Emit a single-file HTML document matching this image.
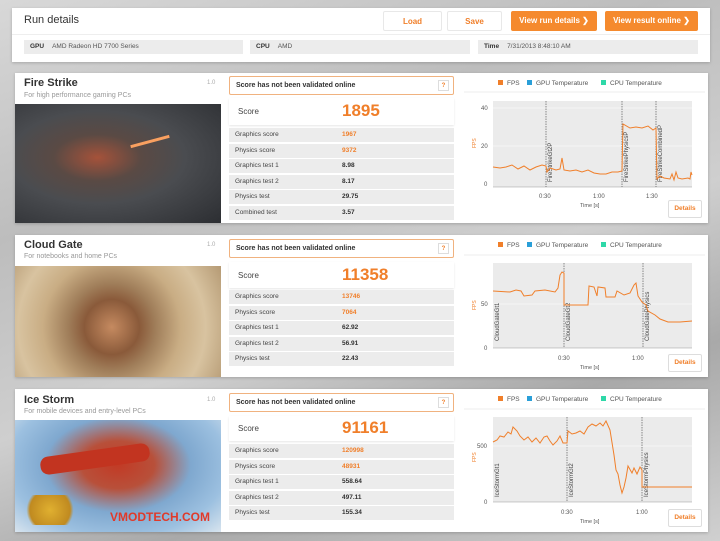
<!DOCTYPE html>
<html><head><meta charset="utf-8"><style>
*{margin:0;padding:0;box-sizing:border-box}
body{width:720px;height:541px;overflow:hidden;position:relative;font-family:"Liberation Sans",sans-serif;
background:linear-gradient(160deg,#d8d8d8 0%,#bdbdbd 30%,#cfcfcf 55%,#a9a9a9 75%,#d0d0d0 100%)}
.a{position:absolute}
.w{background:#fff}
.btn{position:absolute;top:11px;height:20px;font-size:8px;font-weight:bold;text-align:center;line-height:20px;border-radius:2px}
.bw{background:#fff;color:#f07f2a;border:1px solid #e8e8e8}
.bo{background:#f58a2e;color:#fff}
.info{position:absolute;top:40px;height:14px;background:#ececec;font-size:6.5px;line-height:14px;color:#555}
.info b{color:#333;display:inline-block;margin:0 8px 0 6px}
.title{font-size:11px;font-weight:bold;color:#333}
.sub{font-size:7px;color:#999}
.ver{font-size:6px;color:#aaa}
.val{position:absolute;left:229px;width:225px;height:19px;border:1px solid #f0b27f;background:#fff;font-size:7px;font-weight:bold;color:#333;line-height:17px;padding-left:6px;border-radius:2px}
.val i{position:absolute;right:4px;top:3px;width:11px;height:11px;border:1px solid #ddd;font-style:normal;font-size:6px;color:#f07f2a;text-align:center;line-height:10px}
.score{position:absolute;left:229px;width:225px;background:#fff;box-shadow:0 1px 2px rgba(0,0,0,.1)}
.score span{position:absolute;left:9px;font-size:8px;color:#444}
.score b{position:absolute;left:113px;font-size:17px;color:#f07f2a;font-weight:bold}
.row{position:absolute;left:229px;width:225px;height:14px;background:#ececec;font-size:6.5px;line-height:14px;color:#444}
.row span{position:absolute;left:6px}
.row b{position:absolute;left:113px;color:#333}
.row b.o{color:#f07f2a}
.det{position:absolute;width:34px;height:18px;background:#fff;border:1px solid #ddd;font-size:6.5px;font-weight:bold;color:#f07f2a;text-align:center;line-height:16px;border-radius:2px}
</style></head><body>

<div class="a w" style="left:12px;top:8px;width:698px;height:54px;box-shadow:0 1px 3px rgba(0,0,0,.2)"></div>
<div class="a" style="left:24px;top:14px;font-size:11px;color:#333">Run details</div>
<div class="a" style="left:12px;top:34px;width:698px;height:1px;background:#eee"></div>
<div class="btn bw" style="left:383px;width:59px">Load</div>
<div class="btn bw" style="left:447px;width:55px">Save</div>
<div class="btn bo" style="left:511px;width:86px">View run details ❯</div>
<div class="btn bo" style="left:605px;width:93px">View result online ❯</div>
<div class="info" style="left:24px;width:219px"><b>GPU</b>AMD Radeon HD 7700 Series</div>
<div class="info" style="left:250px;width:220px"><b>CPU</b>AMD</div>
<div class="info" style="left:478px;width:220px"><b>Time</b>7/31/2013 8:48:10 AM</div>

<div class="a w" style="left:15px;top:73px;width:693px;height:150px;box-shadow:0 1px 3px rgba(0,0,0,.2)"></div>
<div class="a title" style="left:24px;top:77px">Fire Strike</div>
<div class="a sub" style="left:24px;top:92px">For high performance gaming PCs</div>
<div class="a ver" style="left:207px;top:80px">1.0</div>
<div class="a" style="left:15px;top:104px;width:206px;height:119px;background:radial-gradient(ellipse at 40% 45%,#a5523a 0%,#5a4a44 25%,#4a4c50 50%,#2c2e32 100%)"></div>
<div class="a" style="left:130px;top:140px;width:40px;height:3px;background:#f9a060;transform:rotate(-15deg)"></div>
<div class="val" style="top:76px">Score has not been validated online<i>?</i></div>
<div class="score" style="top:98px;height:27px"><span style="top:9px">Score</span><b style="top:3px">1895</b></div>
<div class="row" style="top:128px"><span>Graphics score</span><b class="o">1967</b></div>
<div class="row" style="top:143.5px"><span>Physics score</span><b class="o">9372</b></div>
<div class="row" style="top:159px"><span>Graphics test 1</span><b>8.98</b></div>
<div class="row" style="top:174.5px"><span>Graphics test 2</span><b>8.17</b></div>
<div class="row" style="top:190px"><span>Physics test</span><b>29.75</b></div>
<div class="row" style="top:205.5px"><span>Combined test</span><b>3.57</b></div>

<div class="a w" style="left:15px;top:235px;width:693px;height:142px;box-shadow:0 1px 3px rgba(0,0,0,.2)"></div>
<div class="a title" style="left:24px;top:239px">Cloud Gate</div>
<div class="a sub" style="left:24px;top:253px">For notebooks and home PCs</div>
<div class="a ver" style="left:207px;top:242px">1.0</div>
<div class="a" style="left:15px;top:266px;width:206px;height:111px;background:radial-gradient(circle at 47% 55%,#c58a60 0%,#8a5a3a 22%,#a07e5a 35%,#c9ad84 55%,#d8c3a0 75%,#b59a74 100%)"></div>
<div class="val" style="top:239px">Score has not been validated online<i>?</i></div>
<div class="score" style="top:262px;height:26px"><span style="top:9px">Score</span><b style="top:3px">11358</b></div>
<div class="row" style="top:290px"><span>Graphics score</span><b class="o">13746</b></div>
<div class="row" style="top:305.5px"><span>Physics score</span><b class="o">7064</b></div>
<div class="row" style="top:321px"><span>Graphics test 1</span><b>62.92</b></div>
<div class="row" style="top:336.5px"><span>Graphics test 2</span><b>56.91</b></div>
<div class="row" style="top:352px"><span>Physics test</span><b>22.43</b></div>

<div class="a w" style="left:15px;top:389px;width:693px;height:143px;box-shadow:0 1px 3px rgba(0,0,0,.2)"></div>
<div class="a title" style="left:24px;top:394px">Ice Storm</div>
<div class="a sub" style="left:24px;top:408px">For mobile devices and entry-level PCs</div>
<div class="a ver" style="left:207px;top:397px">1.0</div>
<div class="a" style="left:15px;top:420px;width:206px;height:112px;background:radial-gradient(ellipse at 50% 40%,#c23a25 0%,#b8503a 25%,#7fa8cf 50%,#9cc0e0 75%,#d8e4ee 100%)"></div>
<div class="a" style="left:40px;top:450px;width:110px;height:18px;background:#c23420;transform:rotate(-8deg);border-radius:8px"></div>
<div class="a" style="left:20px;top:495px;width:60px;height:30px;background:radial-gradient(circle,#e0b030,#c08a20 60%,transparent 70%)"></div>
<div class="a" style="left:110px;top:510px;font-size:12px;font-weight:bold;color:#e03a2a">VMODTECH.COM</div>
<div class="val" style="top:393px">Score has not been validated online<i>?</i></div>
<div class="score" style="top:416px;height:25px"><span style="top:8px">Score</span><b style="top:2px">91161</b></div>
<div class="row" style="top:444px"><span>Graphics score</span><b class="o">120998</b></div>
<div class="row" style="top:459.5px"><span>Physics score</span><b class="o">48931</b></div>
<div class="row" style="top:475px"><span>Graphics test 1</span><b>558.64</b></div>
<div class="row" style="top:490.5px"><span>Graphics test 2</span><b>497.11</b></div>
<div class="row" style="top:506px"><span>Physics test</span><b>155.34</b></div>

<svg class="a" style="left:0;top:0" width="720" height="541" font-family="Liberation Sans, sans-serif">
<defs>
<g id="leg" font-size="6.5" fill="#555">
<rect x="498" y="-3" width="5" height="5" fill="#f07f2a"/><text x="507" y="2">FPS</text>
<rect x="527" y="-3" width="5" height="5" fill="#2a9fd8"/><text x="536" y="2">GPU Temperature</text>
<rect x="601" y="-3" width="5" height="5" fill="#2ed8a8"/><text x="610" y="2">CPU Temperature</text>
</g>
</defs>
<line x1="464" y1="92" x2="705" y2="92" stroke="#eee"/>
<use href="#leg" y="83"/>
<rect x="493" y="101" width="199" height="86" fill="#ebebeb"/>
<line x1="493" y1="146" x2="692" y2="146" stroke="#fff" stroke-width=".6"/>
<line x1="493" y1="108" x2="692" y2="108" stroke="#fff" stroke-width=".6"/>
<line x1="493" y1="187" x2="692" y2="187" stroke="#999" stroke-width=".5"/>
<g font-size="6" fill="#555"><text x="481" y="110">40</text><text x="481" y="148">20</text><text x="484" y="186">0</text>
<text x="539" y="198">0:30</text><text x="593" y="198">1:00</text><text x="646" y="198">1:30</text><text x="580" y="207" font-size="5.5">Time [s]</text></g>
<text transform="translate(476,148) rotate(-90)" font-size="5" fill="#f07f2a">FPS</text>
<g stroke="#444" stroke-width=".6" stroke-dasharray="1.5,1"><line x1="546" y1="101" x2="546" y2="187"/><line x1="622" y1="101" x2="622" y2="187"/><line x1="656" y1="101" x2="656" y2="187"/></g>
<g font-size="6" fill="#444"><text transform="translate(552,182) rotate(-90)">FireStrikeGt2P</text><text transform="translate(628,182) rotate(-90)">FireStrikePhysicsP</text><text transform="translate(662,182) rotate(-90)">FireStrikeCombinedP</text></g>
<polyline fill="none" stroke="#f07f2a" stroke-width="1" points="493,167 500,168 506,167 512,165 518,169 524,166 530,170 536,167 542,165 546,166 547,172 550,168 556,170 560,169 562,158 564,170 570,171 576,170 582,172 588,170 594,173 600,174 606,174 612,172 618,172 622,171 623,124 630,128 636,127 642,128 648,126 653,130 656,128 657,179 660,176 664,178 670,179 672,174 674,180 676,172 678,178 682,179 688,178 690,179 691,172 692,175"/>

<line x1="464" y1="255" x2="705" y2="255" stroke="#eee"/>
<use href="#leg" y="245"/>
<rect x="493" y="263" width="199" height="85" fill="#ebebeb"/>
<line x1="493" y1="304" x2="692" y2="304" stroke="#fff" stroke-width=".6"/>
<line x1="493" y1="348" x2="692" y2="348" stroke="#999" stroke-width=".5"/>
<g font-size="6" fill="#555"><text x="481" y="306">50</text><text x="484" y="350">0</text>
<text x="558" y="360">0:30</text><text x="632" y="360">1:00</text><text x="580" y="369" font-size="5.5">Time [s]</text></g>
<text transform="translate(476,310) rotate(-90)" font-size="5" fill="#f07f2a">FPS</text>
<g stroke="#444" stroke-width=".6" stroke-dasharray="1.5,1"><line x1="564" y1="263" x2="564" y2="348"/><line x1="643" y1="263" x2="643" y2="348"/></g>
<g font-size="6" fill="#444"><text transform="translate(499,341) rotate(-90)">CloudGateGt1</text><text transform="translate(570,341) rotate(-90)">CloudGateGt2</text><text transform="translate(649,341) rotate(-90)">CloudGatePhysics</text></g>
<polyline fill="none" stroke="#f07f2a" stroke-width="1" points="493,291 510,292 516,290 521,291 524,296 532,295 535,291 545,290 555,292 558,288 560,275 562,272 564,273 564,305 580,305 588,305 589,286 594,287 597,296 598,287 605,288 606,297 615,297 617,291 624,295 630,293 634,285 636,283 638,296 642,302 646,305 648,311 655,315 660,319 668,322 680,322 692,321"/>

<line x1="464" y1="409" x2="705" y2="409" stroke="#eee"/>
<use href="#leg" y="399"/>
<rect x="493" y="417" width="199" height="85" fill="#ebebeb"/>
<line x1="493" y1="446" x2="692" y2="446" stroke="#fff" stroke-width=".6"/>
<line x1="493" y1="502" x2="692" y2="502" stroke="#999" stroke-width=".5"/>
<g font-size="6" fill="#555"><text x="477" y="448">500</text><text x="484" y="504">0</text>
<text x="561" y="514">0:30</text><text x="636" y="514">1:00</text><text x="580" y="523" font-size="5.5">Time [s]</text></g>
<text transform="translate(476,462) rotate(-90)" font-size="5" fill="#f07f2a">FPS</text>
<g stroke="#444" stroke-width=".6" stroke-dasharray="1.5,1"><line x1="567" y1="417" x2="567" y2="502"/><line x1="642" y1="417" x2="642" y2="502"/></g>
<g font-size="6" fill="#444"><text transform="translate(499,497) rotate(-90)">IceStormGt1</text><text transform="translate(573,497) rotate(-90)">IceStormGt2</text><text transform="translate(648,497) rotate(-90)">IceStormPhysics</text></g>
<polyline fill="none" stroke="#f07f2a" stroke-width="1" points="493,442 497,440 500,436 504,437 508,432 511,434 513,427 517,431 520,436 524,440 528,437 532,442 536,438 540,443 544,437 547,436 550,441 553,445 557,441 560,436 563,443 567,443 568,431 572,434 576,433 580,431 584,434 588,427 592,424 596,426 600,423 603,426 606,421 610,430 614,455 616,470 618,474 620,485 622,493 624,487 626,478 628,466 632,473 634,468 637,474 640,467 642,470 642,487 660,487 692,487"/>
</svg>
<div class="det" style="left:668px;top:200px">Details</div>
<div class="det" style="left:668px;top:354px">Details</div>
<div class="det" style="left:668px;top:509px">Details</div>
</body></html>
